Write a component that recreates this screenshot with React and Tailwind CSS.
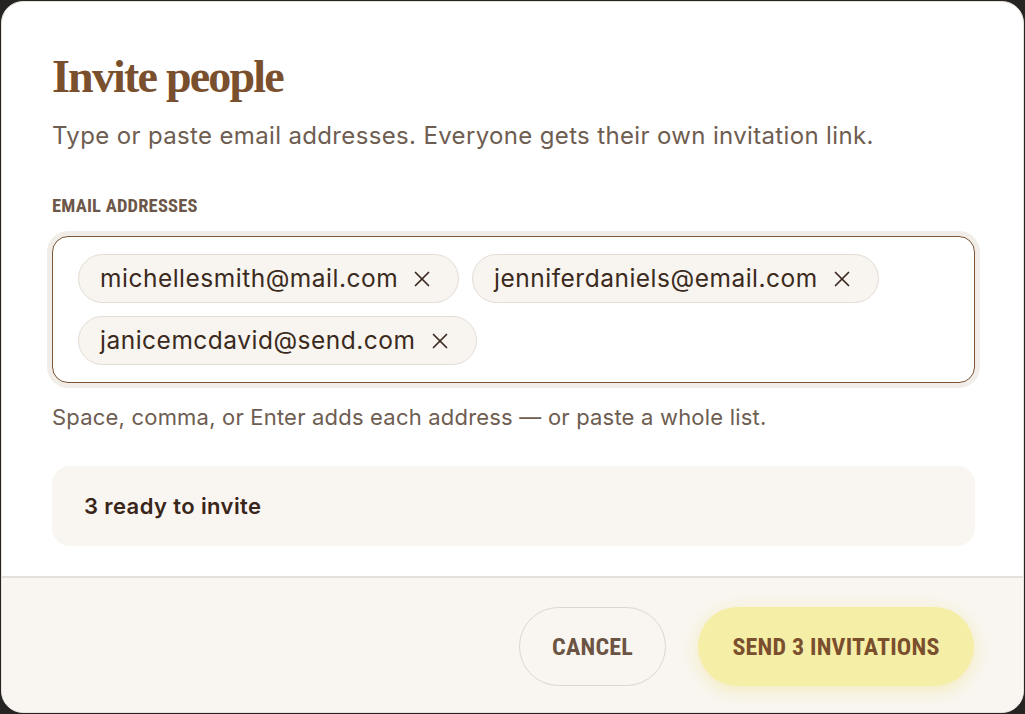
import React from "react";
import { X } from "lucide-react";

const emails = [
	"michellesmith@mail.com",
	"jenniferdaniels@email.com",
	"janicemcdavid@send.com",
];

const sans = { fontFamily: "Inter, 'Noto Sans', sans-serif" };

const Chip = ({ email }) => (
	<span className="inline-flex items-center h-[49px] pl-[21px] pr-[23px] gap-[11px] rounded-full bg-[#f8f5f0] border-[1.5px] border-[#e2dcd4] text-[24.5px] text-[#3b2a20] tracking-[0.5px]">
		{email}
		<X className="w-[26px] h-[26px]" strokeWidth={1.6} />
	</span>
);

export default function App() {
	return (
		<div className="h-[714px] bg-[#262423] p-[1px] overflow-hidden" style={sans}>
			<div className="h-full flex flex-col bg-white rounded-[22px] border border-[#e6e1db] overflow-hidden">
				{/* body */}
				<div className="flex-1 pl-[50px] pr-[48px] pt-[47px]">
					<h1 className="text-[46px] leading-[56px] font-bold text-[#7a4f2d] tracking-[-1.8px] font-['Liberation_Serif',serif]">
						Invite people
					</h1>
					<p className="mt-[15px] text-[24px] leading-[32px] text-[#6e5d51] tracking-[0.35px]">
						Type or paste email addresses. Everyone gets their own invitation
						link.
					</p>
					<div className="mt-[42px] text-[18.5px] leading-[24px] font-bold uppercase text-[#6c5749] tracking-[0.2px] font-['Liberation_Sans_Narrow','Roboto_Condensed',sans-serif]">
						Email addresses
					</div>
					<div className="mt-[13px] rounded-[21px] p-[5px] bg-[#f1ede8] -mx-[5px]">
						<div className="rounded-[16px] border-[1.5px] border-[#7b5535] bg-white pl-[25px] pr-[24px] pt-[17px] pb-[17px] flex flex-wrap gap-[13px]">
							{emails.map((e) => (
								<Chip key={e} email={e} />
							))}
						</div>
					</div>
					<p className="mt-[14px] text-[22px] leading-[30px] text-[#6e5d51] tracking-[0.2px]">
						Space, comma, or Enter adds each address — or paste a whole list.
					</p>
					<div className="mt-[34px] h-[80px] rounded-[18px] bg-[#f9f6f1] flex items-center px-[32px]">
						<span className="text-[22px] font-semibold text-[#3a2519] tracking-[0.4px]">
							3 ready to invite
						</span>
					</div>
				</div>
				{/* footer */}
				<div className="h-[136px] shrink-0 border-t-2 border-[#e5e0d9] bg-[#f9f6f1] flex items-center justify-end gap-[32px] pl-[50px] pr-[49px] pt-[3px]">
					<button className="h-[79px] w-[147px] rounded-full border-[1.5px] border-[#dcd6ce] text-[24px] font-bold uppercase text-[#6c5444] tracking-[0.2px] font-['Liberation_Sans_Narrow','Roboto_Condensed',sans-serif]">
						Cancel
					</button>
					<button className="h-[79px] w-[276px] rounded-full bg-[#f5eea7] text-[24px] font-bold uppercase text-[#7a4f2d] tracking-[0.2px] shadow-[0_4px_18px_rgba(240,226,140,0.55)] font-['Liberation_Sans_Narrow','Roboto_Condensed',sans-serif]">
						Send 3 invitations
					</button>
				</div>
			</div>
		</div>
	);
}
